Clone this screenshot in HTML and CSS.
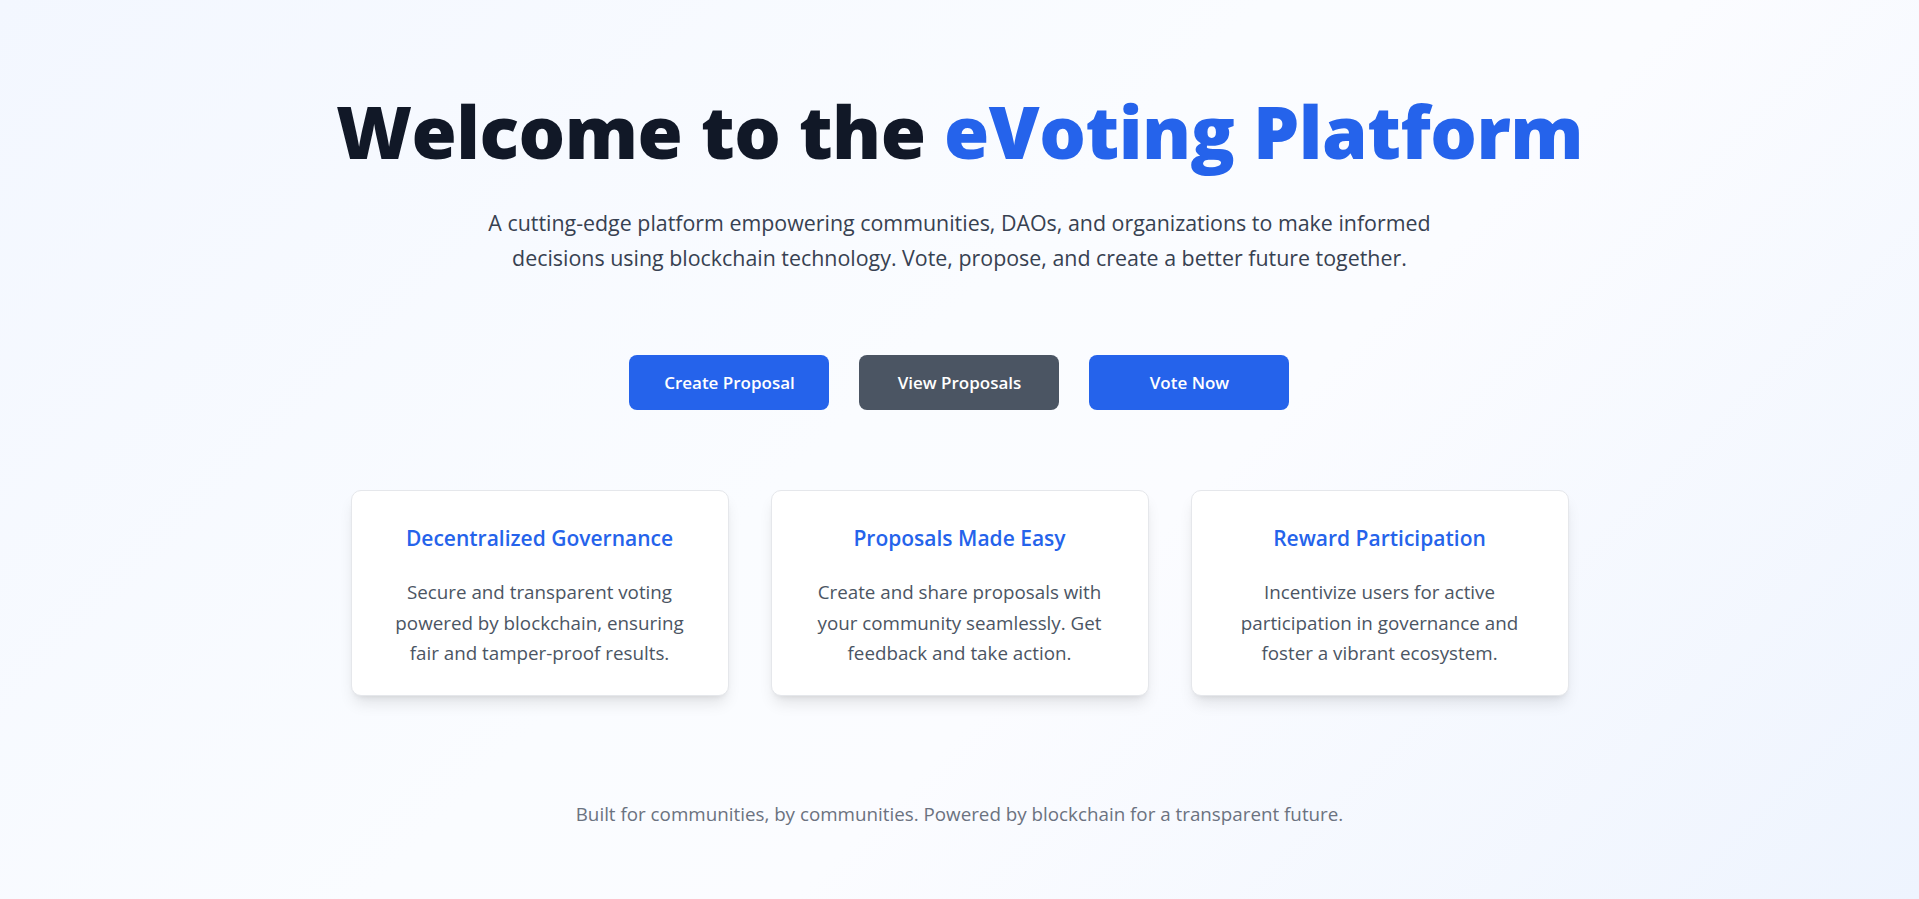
FILE: index.html
```html
<!DOCTYPE html>
<html lang="en">
<head>
<meta charset="utf-8">
<title>eVoting Platform</title>
<link rel="stylesheet" href="styles.css">
</head>
<body>
<main class="page">
  <section class="hero">
    <h1 class="title">Welcome to the <span class="accent">eVoting Platform</span></h1>
    <p class="lead">A cutting-edge platform empowering communities, DAOs, and organizations to make informed decisions using blockchain technology. Vote, propose, and create a better future together.</p>
    <div class="actions">
      <button class="btn btn-primary">Create Proposal</button>
      <button class="btn btn-secondary">View Proposals</button>
      <button class="btn btn-primary">Vote Now</button>
    </div>
  </section>
  <section class="features">
    <div class="card">
      <h2 class="card-title">Decentralized Governance</h2>
      <p class="card-text">Secure and transparent voting powered by blockchain, ensuring fair and tamper-proof results.</p>
    </div>
    <div class="card">
      <h2 class="card-title">Proposals Made Easy</h2>
      <p class="card-text">Create and share proposals with your community seamlessly. Get feedback and take action.</p>
    </div>
    <div class="card">
      <h2 class="card-title">Reward Participation</h2>
      <p class="card-text">Incentivize users for active participation in governance and foster a vibrant ecosystem.</p>
    </div>
  </section>
  <footer class="footer">Built for communities, by communities. Powered by blockchain for a transparent future.</footer>
</main>
</body>
</html>
```

FILE: styles.css
```css
* { box-sizing: border-box; }
html, body { margin: 0; padding: 0; }
body {
  min-height: 899px;
  font-family: "Open Sans", "Noto Sans", sans-serif;
  background: linear-gradient(135deg, #f3f7ff 0%, #fafcff 45%, #fbfcff 60%, #eef4fe 100%);
  color: #111827;
}
.page {
  display: flex;
  flex-direction: column;
  align-items: center;
  padding-top: 86px;
}
.hero {
  display: flex;
  flex-direction: column;
  align-items: center;
}
.title {
  margin: 0;
  font-size: 73.3px;
  line-height: 90px;
  font-weight: 800;
  letter-spacing: -0.5px;
  color: #111827;
}
.accent { color: #2563eb; }
.lead {
  margin: 29px 0 0;
  width: 1000px;
  text-align: center;
  font-size: 21.4px;
  line-height: 35px;
  color: #374151;
}
.actions {
  display: flex;
  gap: 30px;
  margin-top: 80px;
}
.btn {
  width: 200px;
  height: 55px;
  border: none;
  border-radius: 8px;
  font-family: inherit;
  font-size: 17px;
  font-weight: 600;
  color: #ffffff;
}
.btn-primary { background: #2563eb; }
.btn-secondary { background: #4b5563; }
.features {
  display: flex;
  gap: 42px;
  margin-top: 80px;
}
.card {
  width: 378px;
  height: 206px;
  padding: 32px 36px;
  background: #ffffff;
  border: 1px solid #e5e7eb;
  border-radius: 10px;
  box-shadow: 0 10px 15px -3px rgba(0,0,0,0.1), 0 4px 6px -4px rgba(0,0,0,0.1);
  text-align: center;
}
.card-title {
  margin: 0;
  font-size: 21px;
  line-height: 30px;
  font-weight: 600;
  color: #2563eb;
}
.card-text {
  margin: 24px 0 0;
  font-size: 18.8px;
  line-height: 30.5px;
  color: #4b5563;
}
.footer {
  margin-top: 105px;
  font-size: 18.8px;
  color: #6b7280;
}
```
